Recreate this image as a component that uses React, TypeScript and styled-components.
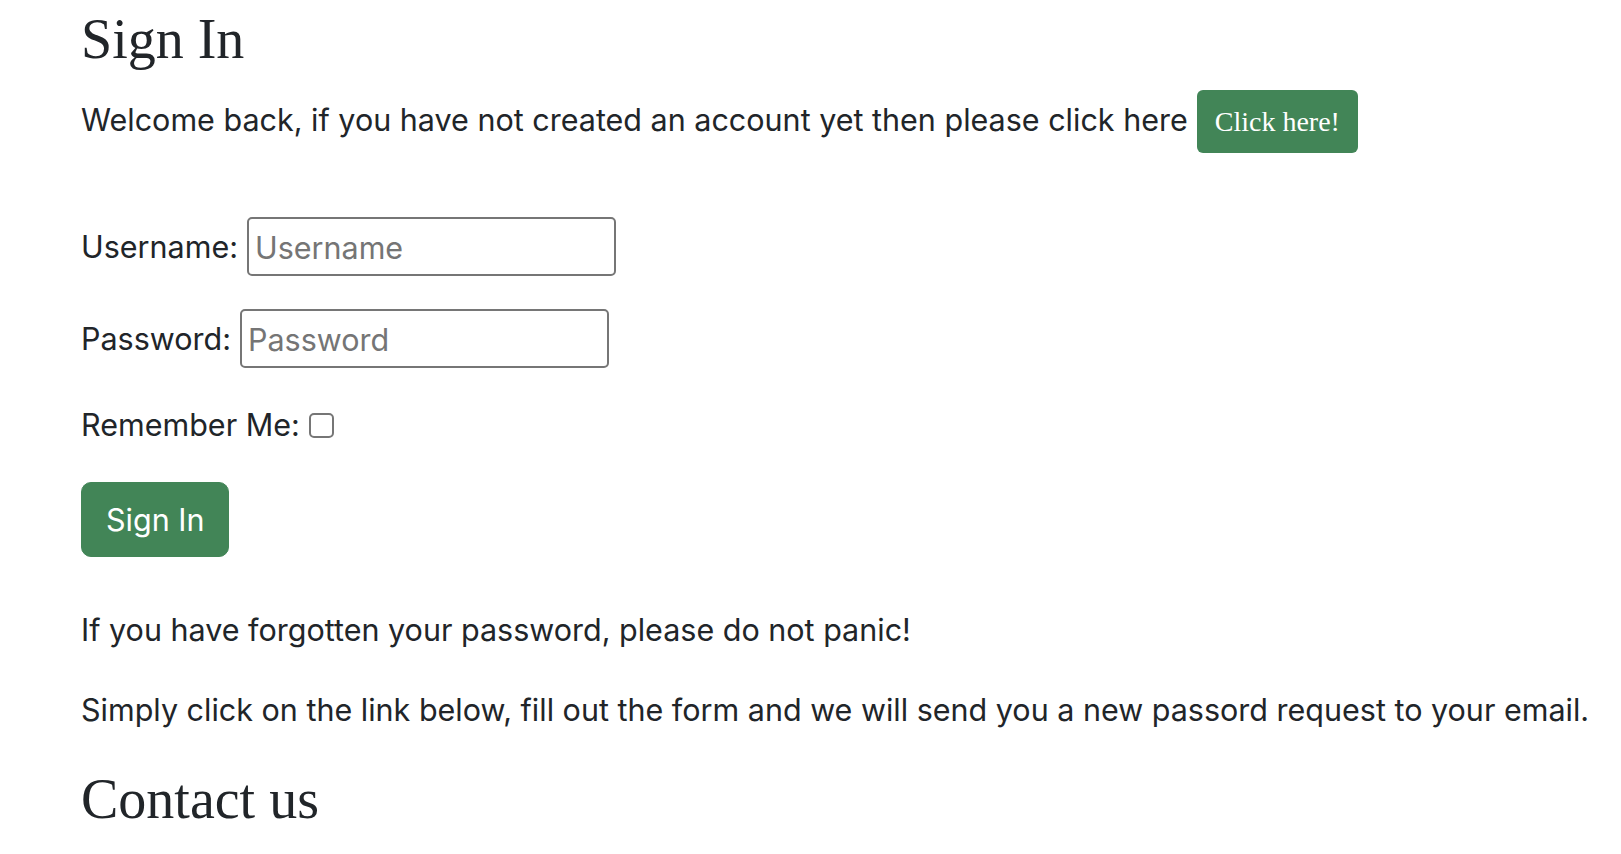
import styled, { createGlobalStyle } from 'styled-components';

const GlobalStyle = createGlobalStyle`
  html, body {
    margin: 0;
    padding: 0;
    background: #fff;
  }
  body {
    font-family: Inter, "Liberation Sans", Arial, sans-serif;
    font-size: 30.5px;
    line-height: 48px;
    color: #212529;
  }
  * {
    box-sizing: border-box;
  }
`;

const Page = styled.main`
  padding: 6px 0 0 81px;
`;

const Heading = styled.h1`
  margin: 0;
  font-family: "Liberation Serif", "Times New Roman", serif;
  font-size: 56px;
  font-weight: 400;
  line-height: 67px;
  color: #212529;
`;

const Lead = styled.p`
  margin: 17px 0 0;
`;

const SmallButton = styled.a`
  display: inline-block;
  margin-left: 9px;
  padding: 16px 18px;
  background: #428557;
  color: #fff;
  border-radius: 6px;
  font-family: "Liberation Serif", "Times New Roman", serif;
  font-size: 28px;
  line-height: 31px;
  text-decoration: none;
  cursor: pointer;
`;

const Form = styled.form`
  display: flex;
  flex-direction: column;
  align-items: flex-start;
  gap: 33px;
  margin-top: 64px;
`;

const Row = styled.div`
  display: flex;
  align-items: center;
  gap: 9px;
  min-height: 48px;
`;

const Label = styled.label`
  white-space: nowrap;
`;

const TextInput = styled.input`
  width: 369px;
  height: 59px;
  padding: 2px 6px 0;
  border: 2px solid #767676;
  border-radius: 5px;
  font-family: inherit;
  font-size: 30.5px;
  color: #212529;
  background: #fff;
  outline: none;

  &::placeholder {
    color: #757575;
  }
`;

const Check = styled.input`
  appearance: none;
  width: 25px;
  height: 25px;
  margin: 0;
  border: 2px solid #767676;
  border-radius: 5px;
  background: #fff;
`;

const SubmitButton = styled.button`
  padding: 12px 24px;
  border: 1px solid #428557;
  border-radius: 10px;
  background: #428557;
  color: #fff;
  font-family: inherit;
  font-size: 30.5px;
  line-height: 49px;
  cursor: pointer;
`;

const Text = styled.p<{ $top?: number }>`
  margin: ${(p) => p.$top ?? 0}px 0 0;
`;

const SubHeading = styled(Heading).attrs({ as: 'h2' })`
  margin-top: 32px;
`;

export default function App() {
  return (
    <>
      <GlobalStyle />
      <Page>
        <Heading>Sign In</Heading>
        <Lead>
          Welcome back, if you have not created an account yet then please click here
          <SmallButton>Click here!</SmallButton>
        </Lead>

        <Form onSubmit={(e) => e.preventDefault()}>
          <Row>
            <Label htmlFor="username">Username:</Label>
            <TextInput id="username" type="text" placeholder="Username" />
          </Row>
          <Row>
            <Label htmlFor="password">Password:</Label>
            <TextInput id="password" type="password" placeholder="Password" />
          </Row>
          <Row>
            <Label htmlFor="remember">Remember Me:</Label>
            <Check id="remember" type="checkbox" />
          </Row>
          <SubmitButton type="submit">Sign In</SubmitButton>
        </Form>

        <Text $top={49}>If you have forgotten your password, please do not panic!</Text>
        <Text $top={32}>
          Simply click on the link below, fill out the form and we will send you a new passord
          request to your email.
        </Text>
        <SubHeading>Contact us</SubHeading>
      </Page>
    </>
  );
}
